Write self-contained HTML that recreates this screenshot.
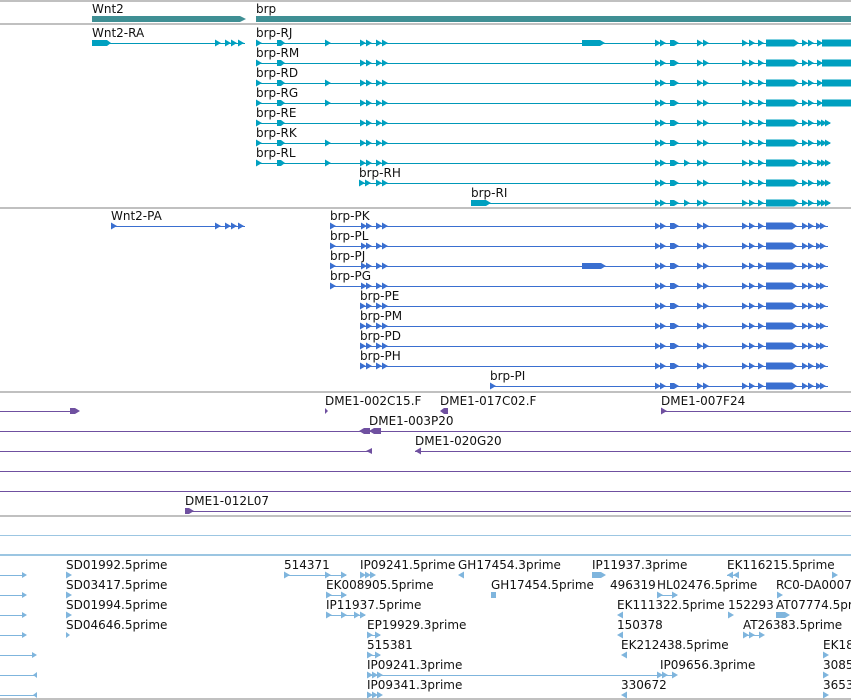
<!DOCTYPE html>
<html><head><meta charset="utf-8"><style>
html,body{margin:0;padding:0;background:#fff;width:851px;height:700px;overflow:hidden}
svg{display:block}
text{font-family:"DejaVu Sans","Liberation Sans",sans-serif;font-size:12px;fill:#111}
line{shape-rendering:crispEdges}
</style></head><body>
<svg width="851" height="700" viewBox="0 0 851 700">
<defs>
<path id="a" d="M0,-3.5 L6,0 L0,3.5Z"/>
<path id="l" d="M6,-3.5 L0,0 L6,3.5Z"/>
<g id="L1"><use href="#a" x="256" y="0"/><path d="M277,-3 H281 L285,0 L281,3 H277Z"/><use href="#a" x="325" y="0"/><use href="#a" x="360" y="0"/><use href="#a" x="366" y="0"/><use href="#a" x="376" y="0"/><use href="#a" x="382" y="0"/></g>
<g id="L2"><use href="#a" x="256" y="0"/><path d="M277,-3 H281 L285,0 L281,3 H277Z"/><use href="#a" x="360" y="0"/><use href="#a" x="366" y="0"/><use href="#a" x="376" y="0"/><use href="#a" x="382" y="0"/></g>
<g id="R"><use href="#a" x="655" y="0"/><use href="#a" x="660" y="0"/><path d="M670,-3 H674 L679,0 L674,3 H670Z"/><use href="#a" x="697" y="0"/><use href="#a" x="703" y="0"/><use href="#a" x="742" y="0"/><use href="#a" x="749" y="0"/><use href="#a" x="758" y="0"/><path d="M766,-3.5 H794 L799,0 L794,3.5 H766Z"/><use href="#a" x="802" y="0"/><use href="#a" x="808" y="0"/></g>
<g id="RL"><use href="#R"/><use href="#a" x="817" y="0"/><rect x="822" y="-3.5" width="29" height="7"/></g>
<g id="RS"><use href="#R"/><use href="#a" x="817" y="0"/><use href="#a" x="821" y="0"/><use href="#a" x="825" y="0"/></g>
<g id="PL"><use href="#a" x="330" y="0"/><use href="#a" x="361" y="0"/><use href="#a" x="366" y="0"/><use href="#a" x="376" y="0"/><use href="#a" x="382" y="0"/></g>
<g id="PL2"><use href="#a" x="360" y="0"/><use href="#a" x="366" y="0"/><use href="#a" x="376" y="0"/><use href="#a" x="382" y="0"/></g>
<g id="PR"><use href="#a" x="655" y="0"/><use href="#a" x="660" y="0"/><path d="M670,-3 H674 L679,0 L674,3 H670Z"/><use href="#a" x="697" y="0"/><use href="#a" x="703" y="0"/><use href="#a" x="742" y="0"/><use href="#a" x="749" y="0"/><use href="#a" x="758" y="0"/><path d="M766,-3.5 H792 L797,0 L792,3.5 H766Z"/><use href="#a" x="802" y="0"/><use href="#a" x="808" y="0"/><use href="#a" x="816" y="0"/><use href="#a" x="820" y="0"/></g>
</defs>
<g stroke="#c0c0c0" stroke-width="2">
<line x1="0" y1="1" x2="851" y2="1"/><line x1="0" y1="24" x2="851" y2="24"/>
<line x1="0" y1="208" x2="851" y2="208"/><line x1="0" y1="392" x2="851" y2="392"/>
<line x1="0" y1="516" x2="851" y2="516"/><line x1="0" y1="699" x2="851" y2="699"/>
</g>
<line x1="0" y1="535.5" x2="851" y2="535.5" stroke="#9cc6e2"/>
<line x1="0" y1="555" x2="851" y2="555" stroke="#9cc6e2" stroke-width="2"/>

<!-- genes -->
<text x="92" y="13">Wnt2</text><text x="256" y="13">brp</text>
<path d="M92,16 H240 L246,19 L240,22 H92Z" fill="#3f8f94"/>
<rect x="256" y="16" width="595" height="6" fill="#3f8f94"/>

<!-- transcripts -->
<g fill="#00a0c0" stroke="#0098b8">
<text x="92" y="37" stroke="none">Wnt2-RA</text>
<line x1="92" y1="43.5" x2="245" y2="43.5"/>
<path d="M92,40 H107 L111,43 L107,46 H92Z" stroke="none"/>
<g stroke="none"><use href="#a" x="215" y="43"/><use href="#a" x="225" y="43"/><use href="#a" x="231" y="43"/><use href="#a" x="238" y="43"/></g>
</g>

<g fill="#00a0c0" stroke="#0098b8" stroke-width="1">
<g stroke="none">
<text x="256" y="37" style="fill:#111">brp-RJ</text>
<text x="256" y="57" style="fill:#111">brp-RM</text>
<text x="256" y="77" style="fill:#111">brp-RD</text>
<text x="256" y="97" style="fill:#111">brp-RG</text>
<text x="256" y="117" style="fill:#111">brp-RE</text>
<text x="256" y="137" style="fill:#111">brp-RK</text>
<text x="256" y="157" style="fill:#111">brp-RL</text>
<text x="359" y="177" style="fill:#111">brp-RH</text>
<text x="471" y="197" style="fill:#111">brp-RI</text>
</g>
<line x1="256" y1="43.5" x2="851" y2="43.5"/><line x1="256" y1="63.5" x2="851" y2="63.5"/>
<line x1="256" y1="83.5" x2="851" y2="83.5"/><line x1="256" y1="103.5" x2="851" y2="103.5"/>
<line x1="256" y1="123.5" x2="830" y2="123.5"/><line x1="256" y1="143.5" x2="830" y2="143.5"/>
<line x1="256" y1="163.5" x2="830" y2="163.5"/><line x1="359" y1="183.5" x2="830" y2="183.5"/>
<line x1="471" y1="203.5" x2="830" y2="203.5"/>
<g stroke="none">
<use href="#L1" y="43"/><use href="#L1" y="103"/><use href="#L1" y="143"/><use href="#L1" y="163"/>
<use href="#L2" y="63"/><use href="#L2" y="123"/>
<use href="#L1" y="83"/>
<use href="#a" x="359" y="183"/><use href="#a" x="365" y="183"/><use href="#a" x="376" y="183"/><use href="#a" x="382" y="183"/>
<path d="M471,200 H486 L491,203 L486,206 H471Z"/>
<path d="M582,40 H600 L605,43 L600,46 H582Z"/>
<use href="#RL" y="43"/><use href="#RL" y="63"/><use href="#RL" y="83"/><use href="#RL" y="103"/>
<use href="#RS" y="123"/><use href="#RS" y="143"/><use href="#RS" y="163"/><use href="#RS" y="183"/><use href="#RS" y="203"/>
<use href="#a" x="684" y="163"/><use href="#a" x="684" y="203"/>
</g>
</g>

<!-- proteins -->
<g fill="#3a6fd0" stroke="#3a6fd0">
<g stroke="none" style="fill:#111">
<text x="111" y="220">Wnt2-PA</text>
<text x="330" y="220">brp-PK</text><text x="330" y="240">brp-PL</text>
<text x="330" y="260">brp-PJ</text><text x="330" y="280">brp-PG</text>
<text x="360" y="300">brp-PE</text><text x="360" y="320">brp-PM</text>
<text x="360" y="340">brp-PD</text><text x="360" y="360">brp-PH</text>
<text x="490" y="380">brp-PI</text>
</g>
<line x1="111" y1="226.5" x2="245" y2="226.5"/>
<line x1="330" y1="226.5" x2="828" y2="226.5"/><line x1="330" y1="246.5" x2="828" y2="246.5"/>
<line x1="330" y1="266.5" x2="828" y2="266.5"/><line x1="330" y1="286.5" x2="828" y2="286.5"/>
<line x1="360" y1="306.5" x2="828" y2="306.5"/><line x1="360" y1="326.5" x2="828" y2="326.5"/>
<line x1="360" y1="346.5" x2="828" y2="346.5"/><line x1="360" y1="366.5" x2="828" y2="366.5"/>
<line x1="490" y1="386.5" x2="828" y2="386.5"/>
<g stroke="none">
<use href="#a" x="111" y="226"/><use href="#a" x="215" y="226"/><use href="#a" x="225" y="226"/><use href="#a" x="231" y="226"/><use href="#a" x="238" y="226"/>
<use href="#PL" y="226"/><use href="#PL" y="246"/><use href="#PL" y="266"/><use href="#PL" y="286"/>
<use href="#PL2" y="306"/><use href="#PL2" y="326"/><use href="#PL2" y="346"/><use href="#PL2" y="366"/>
<use href="#a" x="490" y="386"/>
<path d="M582,263 H601 L606,266 L601,269 H582Z"/>
<use href="#PR" y="226"/><use href="#PR" y="246"/><use href="#PR" y="266"/><use href="#PR" y="286"/>
<use href="#PR" y="306"/><use href="#PR" y="326"/><use href="#PR" y="346"/><use href="#PR" y="366"/><use href="#PR" y="386"/>
</g>
</g>

<!-- DME -->
<g fill="#6f50a0" stroke="#6f50a0">
<g stroke="none" style="fill:#111">
<text x="325" y="405">DME1-002C15.F</text><text x="440" y="405">DME1-017C02.F</text>
<text x="661" y="405">DME1-007F24</text><text x="369" y="425">DME1-003P20</text>
<text x="415" y="445">DME1-020G20</text><text x="185" y="505">DME1-012L07</text>
</g>
<line x1="0" y1="411.5" x2="76" y2="411.5"/><line x1="661" y1="411.5" x2="851" y2="411.5"/>
<line x1="0" y1="431.5" x2="851" y2="431.5"/>
<line x1="0" y1="451.5" x2="372" y2="451.5"/><line x1="415" y1="451.5" x2="851" y2="451.5"/>
<line x1="0" y1="471.5" x2="851" y2="471.5"/><line x1="0" y1="491.5" x2="851" y2="491.5"/>
<line x1="185" y1="511.5" x2="851" y2="511.5"/>
<g stroke="none">
<path d="M70,408 H75 L80,411 L75,414 H70Z"/>
<path d="M325,408 L328,411 L325,414Z"/>
<path d="M448,408 H444 L440,411 L444,414 H448Z"/>
<use href="#a" x="661" y="411"/>
<path d="M370,428 H364 L359,431 L364,434 H370Z"/><path d="M381,428 H374 L369,431 L374,434 H381Z"/>
<path d="M372,448 L366,451 L372,454Z"/>
<use href="#l" x="415" y="451"/>
<path d="M185,508 H189 L194,511 L189,514 H185Z"/>
</g>
</g>

<!-- ESTs -->
<g fill="#7fb5dd" stroke="#7fb5dd">
<g stroke="none" style="fill:#111">
<text x="66" y="569">SD01992.5prime</text><text x="284" y="569">514371</text>
<text x="360" y="569">IP09241.5prime</text><text x="458" y="569">GH17454.3prime</text>
<text x="592" y="569">IP11937.3prime</text><text x="727" y="569">EK116215.5prime</text>
<text x="66" y="589">SD03417.5prime</text><text x="326" y="589">EK008905.5prime</text>
<text x="491" y="589">GH17454.5prime</text><text x="610" y="589">496319</text>
<text x="657" y="589">HL02476.5prime</text><text x="776" y="589">RC0-DA0007</text>
<text x="66" y="609">SD01994.5prime</text><text x="326" y="609">IP11937.5prime</text>
<text x="617" y="609">EK111322.5prime</text><text x="728" y="609">152293</text>
<text x="776" y="609">AT07774.5prime</text>
<text x="66" y="629">SD04646.5prime</text><text x="367" y="629">EP19929.3prime</text>
<text x="617" y="629">150378</text><text x="743" y="629">AT26383.5prime</text>
<text x="367" y="649">515381</text><text x="621" y="649">EK212438.5prime</text><text x="823" y="649">EK18</text>
<text x="367" y="669">IP09241.3prime</text><text x="660" y="669">IP09656.3prime</text><text x="823" y="669">3085</text>
<text x="367" y="689">IP09341.3prime</text><text x="621" y="689">330672</text><text x="823" y="689">3653</text>
</g>
<line x1="0" y1="575.5" x2="25" y2="575.5"/><line x1="0" y1="595.5" x2="25" y2="595.5"/>
<line x1="0" y1="615.5" x2="25" y2="615.5"/><line x1="0" y1="635.5" x2="25" y2="635.5"/>
<line x1="0" y1="655.5" x2="35" y2="655.5"/><line x1="0" y1="675.5" x2="35" y2="675.5"/>
<line x1="0" y1="695.5" x2="35" y2="695.5"/>
<line x1="284" y1="575.5" x2="346" y2="575.5"/><line x1="326" y1="595.5" x2="346" y2="595.5"/>
<line x1="326" y1="615.5" x2="365" y2="615.5"/><line x1="367" y1="635.5" x2="380" y2="635.5"/>
<line x1="367" y1="655.5" x2="380" y2="655.5"/><line x1="367" y1="675.5" x2="676" y2="675.5"/>
<line x1="727" y1="575.5" x2="738" y2="575.5"/><line x1="657" y1="595.5" x2="677" y2="595.5"/>
<line x1="743" y1="635.5" x2="763" y2="635.5"/>
<g stroke="none">
<path d="M22,572 L27,575 L22,578Z"/><path d="M22,592 L27,595 L22,598Z"/>
<path d="M22,612 L27,615 L22,618Z"/><path d="M22,632 L27,635 L22,638Z"/>
<path d="M32,652 L37,655 L32,658Z"/><path d="M37,672 L33,675 L37,678Z"/><path d="M37,692 L33,695 L37,698Z"/>
<use href="#a" x="66" y="575"/><use href="#a" x="66" y="595"/><use href="#a" x="66" y="615"/><path d="M66,632 L70,635 L66,638Z"/>
<use href="#a" x="284" y="575"/><use href="#a" x="325" y="575"/><use href="#a" x="341" y="575"/>
<use href="#a" x="360" y="575"/><use href="#a" x="365" y="575"/><use href="#a" x="370" y="575"/>
<use href="#l" x="458" y="575"/>
<path d="M592,572 H601 L606,575 L601,578 H592Z"/>
<use href="#l" x="727" y="575"/><use href="#l" x="733" y="575"/><use href="#a" x="832" y="575"/>
<use href="#a" x="326" y="595"/><use href="#a" x="341" y="595"/>
<path d="M491,592 H496 V598 H491Z"/>
<use href="#a" x="657" y="595"/><use href="#a" x="672" y="595"/><use href="#a" x="777" y="595"/>
<use href="#a" x="326" y="615"/><use href="#a" x="341" y="615"/><use href="#a" x="354" y="615"/><use href="#a" x="360" y="615"/>
<use href="#l" x="617" y="615"/><use href="#a" x="728" y="615"/><path d="M776,612 H785 L790,615 L785,618 H776Z"/>
<use href="#a" x="367" y="635"/><use href="#a" x="375" y="635"/><use href="#l" x="617" y="635"/>
<use href="#a" x="743" y="635"/><use href="#a" x="749" y="635"/><use href="#a" x="759" y="635"/>
<use href="#a" x="367" y="655"/><use href="#a" x="375" y="655"/><use href="#l" x="621" y="655"/><use href="#a" x="823" y="655"/>
<use href="#a" x="367" y="675"/><use href="#a" x="372" y="675"/><use href="#a" x="377" y="675"/>
<use href="#a" x="657" y="675"/><use href="#a" x="662" y="675"/><use href="#a" x="672" y="675"/><use href="#a" x="823" y="675"/>
<use href="#a" x="367" y="695"/><use href="#a" x="372" y="695"/><use href="#a" x="377" y="695"/>
<use href="#l" x="621" y="695"/><use href="#a" x="823" y="695"/>
</g>
</g>
</svg>
</body></html>
